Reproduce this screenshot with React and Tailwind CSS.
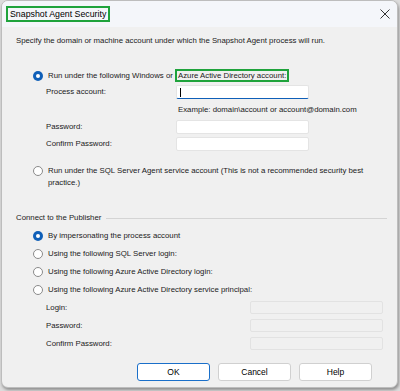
import React from "react";

// Windows 11 style radio button
const Radio = ({ checked }) =>
  checked ? (
    <span className="flex h-[10px] w-[10px] shrink-0 items-center justify-center rounded-full bg-[#0f5fb8]">
      <span className="block h-[4px] w-[4px] rounded-full bg-white"></span>
    </span>
  ) : (
    <span className="block h-[10px] w-[10px] shrink-0 rounded-full border border-[#8a8a8a] bg-white"></span>
  );

const RadioRow = ({ checked, children, className = "" }) => (
  <div className={`flex items-start gap-[5px] ${className}`}>
    <span className="mt-[1px] block">
      <Radio checked={checked} />
    </span>
    <span className="leading-[12px]">{children}</span>
  </div>
);

const Field = ({ label, focused, disabled, className = "" }) => (
  <div className={`flex items-center ${className}`}>
    <span className={`${disabled ? "w-[206px]" : "w-[130px]"} leading-[12px]`}>{label}</span>
    {disabled ? (
      <div className="h-[13px] w-[134px] rounded-[2px] border border-[#e2e2e2] bg-[#f0f0f0]"></div>
    ) : (
      <div
        className={`flex h-[14px] w-[133px] items-center rounded-[2px] border border-[#e4e4e4] bg-white pl-[3px] ${
          focused ? "border-b-[#0f5fb8]" : ""
        }`}
      >
        {focused && <span className="h-[9px] w-px bg-black"></span>}
      </div>
    )}
  </div>
);

export default function App() {
  return (
    <div className="h-[391px] w-[400px] bg-[#dcdcdc] font-['Liberation_Sans',Arial,sans-serif] text-[7.8px] text-[#1a1a1a]">
      <div className="ml-[1px] flex h-[388px] w-[397px] flex-col overflow-hidden rounded-[7px] border border-[#bdbdbd] bg-[#f0f0f0] shadow-[1px_2px_3px_rgba(0,0,0,0.35)]">
        {/* title bar */}
        <div className="flex h-[26px] shrink-0 items-center justify-between bg-[#f4f6fa] pl-[4px] pr-[6px]">
          <span className="border-2 border-[#1fa33c] px-[2px] text-[8.8px] leading-[12px] text-black">
            Snapshot Agent Security
          </span>
          <svg width="12" height="12" viewBox="0 0 12 12" className="text-[#333]">
            <path d="M1.5 1.5 L10.5 10.5 M10.5 1.5 L1.5 10.5" stroke="currentColor" strokeWidth="1" />
          </svg>
        </div>

        <div className="flex flex-1 flex-col px-[14px] pt-[8px]">
          <p className="leading-[12px]">
            Specify the domain or machine account under which the Snapshot Agent process will run.
          </p>

          <div className="mt-[23px] pl-[17px]">
            <RadioRow checked>
              Run under the following Windows or{" "}
              <span className="border-2 border-[#1fa33c] px-px">Azure Active Directory account:</span>
            </RadioRow>
            <div className="pl-[13px]">
              <Field label="Process account:" focused className="mt-[3px]" />
              <p className="mt-[5px] pl-[132px] leading-[12px]">
                {"Example: domain\\account or account@domain.com"}
              </p>
              <Field label="Password:" className="mt-[4px]" />
              <Field label="Confirm Password:" className="mt-[3px]" />
            </div>
            <RadioRow className="mt-[14px]">
              Run under the SQL Server Agent service account (This is not a recommended security best
              <br />
              practice.)
            </RadioRow>
          </div>

          {/* group separator */}
          <div className="-mr-[4px] mt-[23px] flex items-center gap-[5px]">
            <span className="leading-[12px]">Connect to the Publisher</span>
            <span className="h-px flex-1 bg-[#d4d4d4]"></span>
          </div>

          <div className="mt-[6px] flex flex-col gap-[6px] pl-[17px]">
            <RadioRow checked>By impersonating the process account</RadioRow>
            <RadioRow>Using the following SQL Server login:</RadioRow>
            <RadioRow>Using the following Azure Active Directory login:</RadioRow>
            <RadioRow>Using the following Azure Active Directory service principal:</RadioRow>
          </div>
          <div className="mt-[5px] flex flex-col gap-[5px] pl-[30px]">
            <Field label="Login:" disabled />
            <Field label="Password:" disabled />
            <Field label="Confirm Password:" disabled />
          </div>

          <div className="mt-[13px] flex justify-end gap-[8px] pr-[11px]">
            <button className="h-[18px] w-[73px] rounded-[3px] border border-[#1a6fc9] bg-white text-[8.5px] text-black">
              OK
            </button>
            <button className="h-[18px] w-[73px] rounded-[3px] border border-[#d0d0d0] bg-white text-[8.5px] text-black">
              Cancel
            </button>
            <button className="h-[18px] w-[73px] rounded-[3px] border border-[#d0d0d0] bg-white text-[8.5px] text-black">
              Help
            </button>
          </div>
        </div>
      </div>
    </div>
  );
}
